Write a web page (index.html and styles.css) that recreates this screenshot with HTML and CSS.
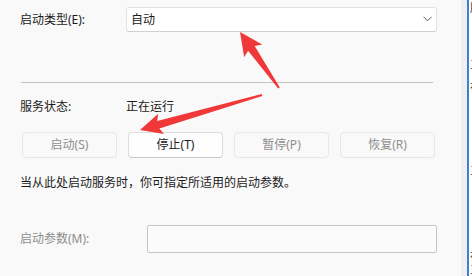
FILE: index.html
```html
<!DOCTYPE html>
<html lang="zh-CN">
<head>
<meta charset="utf-8">
<title>服务属性</title>
<link rel="stylesheet" href="styles.css">
</head>
<body>
<div class="page">
  <div class="panel">
    <div class="row row-type">
      <span class="label">启动类型(E):</span>
      <div class="select">
        <span class="select-value">自动</span>
        <svg class="chevron" width="9" height="6" viewBox="0 0 9 6"><path d="M0.5 0.8 L4.5 4.8 L8.5 0.8" fill="none" stroke="#5c5c5c" stroke-width="1"/></svg>
      </div>
    </div>
    <div class="sep"></div>
    <div class="row row-status">
      <span class="label">服务状态:</span>
      <span class="value">正在运行</span>
    </div>
    <div class="buttons">
      <div class="btn disabled">启动(S)</div>
      <div class="btn">停止(T)</div>
      <div class="btn disabled">暂停(P)</div>
      <div class="btn disabled">恢复(R)</div>
    </div>
    <p class="desc">当从此处启动服务时，你可指定所适用的启动参数。</p>
    <div class="row row-param">
      <span class="label label-param disabled-text">启动参数(M):</span>
      <div class="input"></div>
    </div>
  </div>
  <div class="edge"></div>
  <div class="bline"></div>
  <div class="other">
    <span class="frag f1">服</span>
    <span class="frag f2">三</span>
    <span class="frag f3">在</span>
    <span class="frag f4">三</span>
    <span class="frag f5">在</span>
    <span class="frag f6">三</span>
  </div>
  <svg class="arrows" width="472" height="276" viewBox="0 0 472 276">
    <polygon fill="#f03838" points="240,32 262.2,44.6 254.7,46.1 279.8,87.4 278.2,88.6 248.1,50.7 244.2,57.2"/>
    <polygon fill="#f03838" points="140,130 164,134.1 159.4,128.6 262.3,96 261.7,94 157.2,121 158.2,113.7"/>
  </svg>
</div>
</body>
</html>
```

FILE: styles.css
```css
html, body {
  margin: 0;
  padding: 0;
}
body {
  background: #f9f9f9;
  font-family: "Noto Sans", "Noto Sans CJK SC", sans-serif;
  font-size: 12px;
  color: #1b1b1b;
}
.page {
  position: relative;
  display: flex;
  width: 472px;
  height: 276px;
  overflow: hidden;
}
.panel {
  width: 461px;
  flex: none;
  box-sizing: border-box;
  padding: 7px 24px 0 20px;
  background: #f9f9f9;
}
.row {
  display: flex;
  align-items: center;
}
.label {
  width: 106px;
  flex: none;
  line-height: 16px;
}
.select {
  flex: 1;
  height: 25px;
  box-sizing: border-box;
  background: #ffffff;
  border: 1px solid #e2e2e2;
  border-bottom-color: #cfcfcf;
  border-radius: 3px;
  display: flex;
  align-items: center;
  justify-content: space-between;
  padding: 0 4px 0 4px;
}
.select-value {
  line-height: 16px;
}
.chevron {
  display: block;
  margin-top: -1px;
}
.sep {
  height: 1px;
  background: #c2c2c2;
  margin: 50px 4px 0 1px;
}
.row-status {
  margin-top: 16px;
  line-height: 16px;
}
.buttons {
  display: grid;
  grid-template-columns: repeat(4, 95px);
  column-gap: 11px;
  margin: 17px 0 0 2px;
}
.btn {
  height: 26px;
  box-sizing: border-box;
  border: 1px solid #dcdcdc;
  border-bottom-color: #c8c8c8;
  border-radius: 4px;
  background: #fefefe;
  display: flex;
  align-items: center;
  justify-content: center;
  line-height: 16px;
}
.btn.disabled {
  background: #f9f9f9;
  border-color: #e7e7e7;
  color: #8f8f8f;
}
.desc {
  margin: 17px 0 0 0;
  line-height: 16px;
}
.row-param {
  margin-top: 34px;
}
.label-param {
  width: 127px;
}
.disabled-text {
  color: #8c8c8c;
}
.input {
  flex: 1;
  height: 28px;
  box-sizing: border-box;
  border: 1px solid #c6c6c6;
  border-radius: 2px;
  background: #fbfbfb;
}
.edge {
  width: 6px;
  flex: none;
  background: #efeff0;
}
.bline {
  width: 2px;
  flex: none;
  background: #3f7fd4;
}
.other {
  flex: 1;
  background: #ffffff;
  overflow: hidden;
  display: flex;
  flex-direction: column;
  padding-left: 1px;
}
.frag {
  display: block;
  font-size: 11px;
  line-height: 12px;
  height: 12px;
  overflow: hidden;
  color: #333333;
  white-space: nowrap;
}
.f1 { margin-top: 2px; }
.f2 { margin-top: 45px; }
.f3 { margin-top: 11px; }
.f4 { margin-top: 72px; }
.f5 { margin-top: 73px; }
.f6 { margin-top: 3px; }
.arrows {
  position: absolute;
  left: 0;
  top: 0;
  pointer-events: none;
}
```
